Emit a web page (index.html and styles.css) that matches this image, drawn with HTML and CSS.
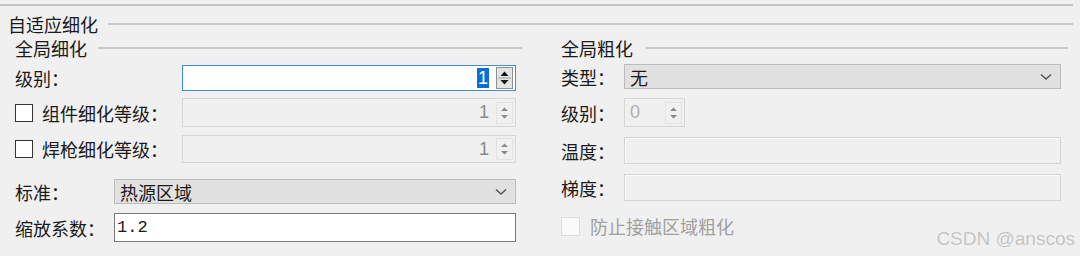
FILE: index.html
```html
<!DOCTYPE html>
<html lang="zh-CN">
<head>
    <meta charset="UTF-8">
    <meta name="viewport" content="width=device-width, initial-scale=1.0">
    <title>自适应细化</title>
    <link rel="stylesheet" href="styles.css">
</head>
<body>
    <div class="top-rule"></div>
    <div class="group-title"><span>自适应细化</span></div>
    <div class="cols">
        <!-- 全局细化 -->
        <div class="col left">
            <div class="col-title"><span>全局细化</span></div>
            <div class="row r1">
                <span class="lab wide">级别：</span>
                <div class="spin active">
                    <span class="val"><span class="sel">1</span></span>
                    <span class="btns">
                        <svg width="15" height="20" viewBox="0 0 15 20"><path d="M3.5 8 L7.5 3.5 L11.5 8 Z M3.5 12 L11.5 12 L7.5 16.5 Z" fill="#111"/><line x1="1" y1="10" x2="14" y2="10" stroke="#9a9a9a"/></svg>
                    </span>
                </div>
            </div>
            <div class="row r2">
                <span class="lab wide"><span class="check"></span>组件细化等级：</span>
                <div class="spin off">
                    <span class="val">1</span>
                    <span class="btns">
                        <svg width="15" height="20" viewBox="0 0 15 20"><path d="M4 8 L7.5 4.5 L11 8 Z M4 12 L11 12 L7.5 15.5 Z" fill="#8a8a8a"/></svg>
                    </span>
                </div>
            </div>
            <div class="row r3">
                <span class="lab wide"><span class="check"></span>焊枪细化等级：</span>
                <div class="spin off">
                    <span class="val">1</span>
                    <span class="btns">
                        <svg width="15" height="20" viewBox="0 0 15 20"><path d="M4 8 L7.5 4.5 L11 8 Z M4 12 L11 12 L7.5 15.5 Z" fill="#8a8a8a"/></svg>
                    </span>
                </div>
            </div>
            <div class="row r4">
                <span class="lab">标准：</span>
                <div class="combo">
                    <span>热源区域</span>
                    <svg width="14" height="10" viewBox="0 0 14 10"><path d="M2 2.5 L7 7 L12 2.5" fill="none" stroke="#555" stroke-width="1.5"/></svg>
                </div>
            </div>
            <div class="row r5">
                <span class="lab">缩放系数：</span>
                <div class="text-input">1.2</div>
            </div>
        </div>

        <!-- 全局粗化 -->
        <div class="col right">
            <div class="col-title"><span>全局粗化</span></div>
            <div class="row q1">
                <span class="lab short">类型：</span>
                <div class="combo">
                    <span>无</span>
                    <svg width="14" height="10" viewBox="0 0 14 10"><path d="M2 2.5 L7 7 L12 2.5" fill="none" stroke="#555" stroke-width="1.5"/></svg>
                </div>
            </div>
            <div class="row q2">
                <span class="lab short">级别：</span>
                <div class="spin off small">
                    <span class="val">0</span>
                    <span class="btns">
                        <svg width="15" height="20" viewBox="0 0 15 20"><path d="M4 8 L7.5 4.5 L11 8 Z M4 12 L11 12 L7.5 15.5 Z" fill="#8a8a8a"/></svg>
                    </span>
                </div>
            </div>
            <div class="row q3">
                <span class="lab short">温度：</span>
                <div class="text-input off"></div>
            </div>
            <div class="row q4">
                <span class="lab short">梯度：</span>
                <div class="text-input off"></div>
            </div>
            <div class="row q5">
                <span class="check dis"></span>
                <span class="dis-text">防止接触区域粗化</span>
            </div>
        </div>
    </div>
    <div class="watermark">CSDN @anscos</div>
</body>
</html>
```

FILE: styles.css
```css
body {
    margin: 0;
    width: 1080px;
    height: 256px;
    background-color: #f0f0f0;
    font-family: "Noto Sans CJK SC", "Noto Sans", sans-serif;
    font-size: 18px;
    color: #1a1a1a;
    position: relative;
    overflow: hidden;
}
.top-rule {
    margin: 4px 7px 0 0;
    border-top: 2px solid #c4c4c4;
}
.group-title {
    display: flex;
    align-items: center;
    height: 24px;
    margin-top: 6px;
    padding-left: 8px;
    margin-right: 7px;
}
.group-title::after, .col-title::after {
    content: "";
    flex: 1;
    border-top: 2px solid #c8c8c8;
    margin-left: 10px;
}
.cols {
    display: flex;
    gap: 39px;
    padding-left: 15px;
}
.col {
    width: 507px;
}
.col-title {
    display: flex;
    align-items: center;
    height: 24px;
}
.left .col-title::after {
    margin-left: 11px;
}
.right .col-title::after {
    margin-left: 13px;
}
.row {
    display: flex;
    align-items: center;
}
.lab {
    width: 99px;
    flex: none;
    display: flex;
    align-items: center;
}
.lab.wide {
    width: 167px;
}
.lab.short {
    width: 63px;
}
.r1 { margin-top: 5px; height: 26px; }
.r2 { margin-top: 7px; height: 29px; }
.r3 { margin-top: 8px; height: 28px; }
.r4 { margin-top: 16px; height: 25px; }
.r5 { margin-top: 9px; height: 29px; }
.q1 { margin-top: 4px; height: 25px; }
.q2 { margin-top: 9px; height: 29px; }
.q3 { margin-top: 10px; height: 27px; }
.q4 { margin-top: 10px; height: 27px; }
.q5 { margin-top: 15px; height: 20px; }

.check {
    width: 16px;
    height: 16px;
    border: 1px solid #333;
    background: #fff;
    margin-right: 9px;
    flex: none;
}
.check.dis {
    width: 17px;
    height: 17px;
    border-color: #dcdcdc;
    background: #fafafa;
    margin-right: 10px;
}
.dis-text {
    color: #a0a0a0;
}

.spin {
    width: 334px;
    height: 100%;
    box-sizing: border-box;
    display: flex;
    align-items: center;
    justify-content: flex-end;
    padding-right: 2px;
}
.spin.active {
    border: 1px solid #3d8ee0;
    background: #fff;
}
.spin.off {
    border: 1px solid #d6d6d6;
    background: #f0f0f0;
    color: #8a8a8a;
}
.spin .val {
    padding-right: 7px;
    font-family: "Liberation Sans", "Noto Sans CJK SC", sans-serif;
}
.sel {
    background: #0a6fd0;
    color: #fff;
    padding: 0 1px;
}
.btns {
    display: flex;
    width: 17px;
    height: 22px;
    box-sizing: border-box;
    align-items: center;
    justify-content: center;
}
.active .btns {
    border: 1px solid #8f8f8f;
    background: #e4e4e4;
}
.off .btns {
    border: 1px solid #e2e2e2;
}
.spin.small {
    width: 61px;
    justify-content: space-between;
    padding-left: 5px;
}
.spin.small .val {
    color: #b0b0b0;
}

.combo {
    flex: 1;
    margin-right: 6px;
    height: 100%;
    box-sizing: border-box;
    border: 1px solid #bcbcbc;
    background: #e1e1e1;
    display: flex;
    align-items: center;
    justify-content: space-between;
    padding: 0 7px 0 5px;
}
.right .combo {
    margin-right: 0;
    flex: none;
    width: 437px;
}
.text-input {
    flex: 1;
    margin-right: 6px;
    height: 100%;
    box-sizing: border-box;
    border: 1px solid #7a7a7a;
    background: #fff;
    display: flex;
    align-items: center;
    padding-left: 2px;
    font-family: "Liberation Mono", monospace;
    font-size: 17px;
}
.text-input.off {
    flex: none;
    width: 437px;
    margin-right: 0;
    border: 1px solid #d4d4d4;
    box-shadow: inset 1px 1px 0 #fafafa;
    background: #f0f0f0;
}

.watermark {
    position: absolute;
    right: 5px;
    top: 228px;
    font-family: "Liberation Sans", Arial, sans-serif;
    font-size: 19px;
    color: #c4c4c4;
    text-shadow: 0 0 1px #fff;
}
```
